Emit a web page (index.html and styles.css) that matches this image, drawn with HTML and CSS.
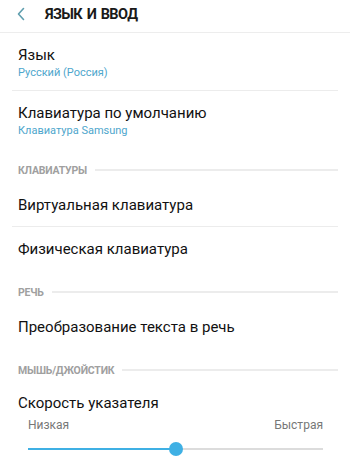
FILE: index.html
```html
<!DOCTYPE html>
<html lang="ru">
<head>
    <meta charset="UTF-8">
    <meta name="viewport" content="width=device-width, initial-scale=1.0">
    <title>Язык и ввод</title>
    <link rel="stylesheet" href="styles.css">
</head>
<body>
    <header class="topbar">
        <svg class="back" width="10" height="14" viewBox="0 0 10 14">
            <path d="M7.5 1.5 L2.5 7 L7.5 12.5" fill="none" stroke="#5f9eae" stroke-width="1.6" stroke-linecap="round" stroke-linejoin="round"/>
        </svg>
        <h1>ЯЗЫК И ВВОД</h1>
    </header>

    <div class="group">
        <div class="item two-line">
            <div class="item-title">Язык</div>
            <div class="item-sub">Русский (Россия)</div>
        </div>
        <div class="item two-line">
            <div class="item-title">Клавиатура по умолчанию</div>
            <div class="item-sub">Клавиатура Samsung</div>
        </div>
    </div>

    <div class="category"><span>КЛАВИАТУРЫ</span><i class="rule"></i></div>
    <div class="group">
        <div class="item single">Виртуальная клавиатура</div>
        <div class="item single">Физическая клавиатура</div>
    </div>

    <div class="category"><span>РЕЧЬ</span><i class="rule"></i></div>
    <div class="group">
        <div class="item single">Преобразование текста в речь</div>
    </div>

    <div class="category"><span>МЫШЬ/ДЖОЙСТИК</span><i class="rule"></i></div>
    <div class="slider-item">
        <div class="item-title">Скорость указателя</div>
        <div class="slider-labels">
            <span>Низкая</span>
            <span>Быстрая</span>
        </div>
        <div class="slider">
            <div class="track"></div>
            <div class="fill" style="width: 50%"></div>
            <div class="thumb" style="left: 50%"></div>
        </div>
    </div>
</body>
</html>
```

FILE: styles.css
```css
* {
    margin: 0;
    padding: 0;
    box-sizing: border-box;
}

body {
    font-family: Roboto, 'Noto Sans', sans-serif;
    background: #fff;
    color: #111;
    width: 350px;
    overflow: hidden;
}

/* Top bar */
.topbar {
    height: 33px;
    display: flex;
    align-items: center;
    padding: 0 0 4px 16px;
    border-bottom: 1px solid #ededed;
}

.back {
    display: block;
    margin-right: 19px;
}

.topbar h1 {
    font-size: 14.5px;
    font-weight: 700;
    letter-spacing: -0.6px;
    word-spacing: 1.5px;
    color: #1a1a1a;
}

/* Lists */
.group {
    margin: 0 12px;
}

.item {
    padding-left: 6px;
}

.item + .item {
    border-top: 1px solid #ececec;
}

.two-line {
    padding-top: 12px;
    padding-bottom: 10px;
}

.item-title {
    font-size: 15px;
    line-height: 20px;
}

.item-sub {
    font-size: 11px;
    line-height: 15px;
    color: #4ea6cc;
}

.single {
    height: 43px;
    display: flex;
    align-items: center;
    font-size: 15px;
}

.item + .single {
    height: 44px;
}

/* Category headers */
.category {
    height: 35px;
    margin: 0 12px;
    padding: 9px 0 0 6px;
    display: flex;
    align-items: center;
    font-size: 10.5px;
    font-weight: 700;
    letter-spacing: -0.2px;
    color: #a0a0a0;
}

.category .rule {
    flex: 1;
    height: 2px;
    margin-left: 8px;
    background: #ececec;
}

/* Pointer speed */
.slider-item {
    padding: 10px 0 0 18px;
}

.slider-labels {
    display: flex;
    justify-content: space-between;
    margin: 4px 27px 0 10px;
    font-size: 12px;
    line-height: 16px;
    color: #777;
}

.slider {
    position: relative;
    height: 16px;
    margin: 8px 27px 0 10px;
}

.track,
.fill {
    position: absolute;
    left: 0;
    top: 7px;
    height: 2px;
}

.track {
    width: 100%;
    background: #dcdcdc;
}

.fill {
    background: #3fb0e4;
}

.thumb {
    position: absolute;
    top: 1px;
    width: 14px;
    height: 14px;
    margin-left: -7px;
    border-radius: 50%;
    background: #3fb0e4;
}
```
